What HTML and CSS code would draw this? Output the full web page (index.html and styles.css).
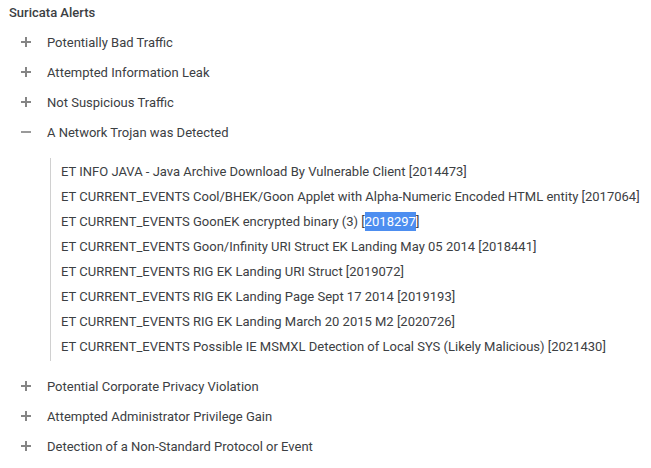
FILE: index.html
```html
<!DOCTYPE html>
<html>
<head>
<meta charset="utf-8">
<link rel="stylesheet" href="styles.css">
</head>
<body>
<div class="panel">
  <div class="title">Suricata Alerts</div>
  <ul class="tree">
    <li class="node"><div class="row"><span class="icon plus"></span><span class="label">Potentially Bad Traffic</span></div></li>
    <li class="node"><div class="row"><span class="icon plus"></span><span class="label">Attempted Information Leak</span></div></li>
    <li class="node"><div class="row"><span class="icon plus"></span><span class="label">Not Suspicious Traffic</span></div></li>
    <li class="node open"><div class="row"><span class="icon minus"></span><span class="label">A Network Trojan was Detected</span></div>
      <ul class="sub">
        <li>ET INFO JAVA - Java Archive Download By Vulnerable Client [2014473]</li>
        <li>ET CURRENT_EVENTS Cool/BHEK/Goon Applet with Alpha-Numeric Encoded HTML entity [2017064]</li>
        <li>ET CURRENT_EVENTS GoonEK encrypted binary (3) [<span class="sel">2018297</span>]</li>
        <li>ET CURRENT_EVENTS Goon/Infinity URI Struct EK Landing May 05 2014 [2018441]</li>
        <li>ET CURRENT_EVENTS RIG EK Landing URI Struct [2019072]</li>
        <li>ET CURRENT_EVENTS RIG EK Landing Page Sept 17 2014 [2019193]</li>
        <li>ET CURRENT_EVENTS RIG EK Landing March 20 2015 M2 [2020726]</li>
        <li>ET CURRENT_EVENTS Possible IE MSMXL Detection of Local SYS (Likely Malicious) [2021430]</li>
      </ul>
    </li>
    <li class="node"><div class="row"><span class="icon plus"></span><span class="label">Potential Corporate Privacy Violation</span></div></li>
    <li class="node"><div class="row"><span class="icon plus"></span><span class="label">Attempted Administrator Privilege Gain</span></div></li>
    <li class="node"><div class="row"><span class="icon plus"></span><span class="label">Detection of a Non-Standard Protocol or Event</span></div></li>
  </ul>
</div>
</body>
</html>
```
FILE: styles.css
```css
html, body {
  margin: 0;
  padding: 0;
  background: #ffffff;
}
body {
  font-family: Roboto, "Noto Sans", sans-serif;
  font-size: 13px;
  color: #3c4043;
}
.panel {
  padding: 4px 0 0 9px;
}
.title {
  height: 18px;
  line-height: 18px;
  font-weight: 500;
  color: #3c4043;
  margin-bottom: 5px;
}
.tree {
  list-style: none;
  margin: 0;
  padding: 0;
}
.row {
  display: flex;
  align-items: center;
  height: 30px;
}
.icon {
  position: relative;
  width: 10px;
  height: 10px;
  margin-left: 12px;
  margin-right: 16px;
}
.icon::before,
.icon::after {
  content: "";
  position: absolute;
  background: #858585;
}
.icon::before {
  left: 0;
  top: 4px;
  width: 10px;
  height: 1.5px;
}
.minus::before {
  background: #9a9a9a;
  height: 2px;
}
.plus::after {
  left: 4.25px;
  top: 0;
  width: 1.5px;
  height: 10px;
}
.sub {
  list-style: none;
  margin: 11px 0 10px 41px;
  padding: 1px 0 2px 10px;
  border-left: 1px solid #d0d0d0;
}
.sub li {
  height: 25px;
  line-height: 25px;
  white-space: nowrap;
}
.sel {
  background: #4d8ef0;
  color: #ffffff;
  padding: 2px 0;
}
```
